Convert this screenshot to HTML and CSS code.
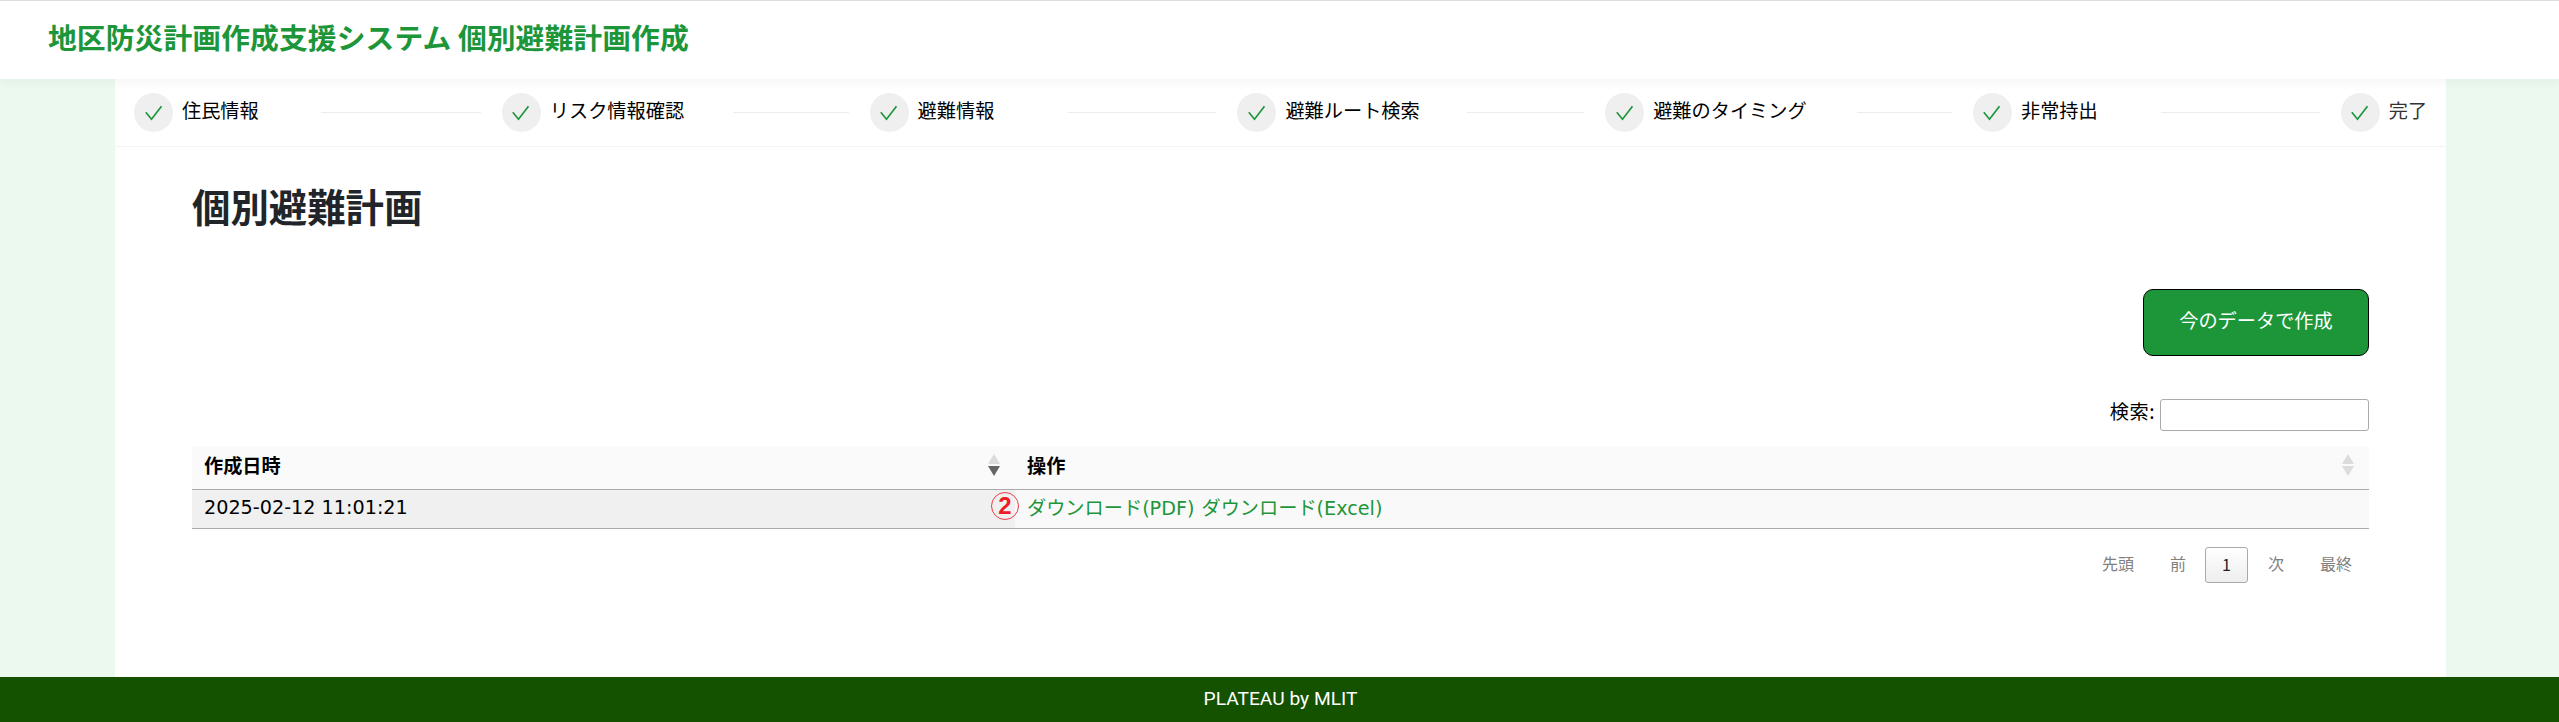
FILE: index.html
```html
<!DOCTYPE html>
<html lang="ja">
<head>
<meta charset="utf-8">
<title>個別避難計画作成</title>
<link rel="stylesheet" href="styles.css">
</head>
<body>
<svg class="defs" width="0" height="0"><symbol id="check" viewBox="0 0 18 20"><path d="M.8 9.3 6.5 16.2 16.5 3.2" fill="none" stroke="currentColor" stroke-width="1.7"/></symbol></svg>
<header class="header"><h1 class="header-title">地区防災計画作成支援システム 個別避難計画作成</h1></header>
<main class="container">
  <ol class="steps">
    <li class="step"><span class="mark"><svg><use href="#check"/></svg></span><span class="label">住民情報</span><span class="line" style="width:160px"></span></li>
    <li class="step"><span class="mark"><svg><use href="#check"/></svg></span><span class="label">リスク情報確認</span><span class="line" style="width:116px"></span></li>
    <li class="step"><span class="mark"><svg><use href="#check"/></svg></span><span class="label">避難情報</span><span class="line" style="width:148px"></span></li>
    <li class="step"><span class="mark"><svg><use href="#check"/></svg></span><span class="label">避難ルート検索</span><span class="line" style="width:117px"></span></li>
    <li class="step"><span class="mark"><svg><use href="#check"/></svg></span><span class="label">避難のタイミング</span><span class="line" style="width:95px"></span></li>
    <li class="step"><span class="mark"><svg><use href="#check"/></svg></span><span class="label">非常持出</span><span class="line" style="width:159px"></span></li>
    <li class="step step-last"><span class="mark"><svg><use href="#check"/></svg></span><span class="label">完了</span></li>
  </ol>
  <section class="content">
    <h2 class="title">個別避難計画</h2>
    <div class="actions"><button class="create" type="button">今のデータで作成</button></div>
    <label class="search"><span class="search-label">検索:</span><input class="search-input" type="text"></label>
    <div class="table">
      <div class="row head">
        <div class="cell date">作成日時<svg class="sort" viewBox="0 0 12 22"><path d="M0 10 6 0l6 10z" fill="#dcdcdc"/><path d="M0 12h12L6 22z" fill="#666"/></svg></div>
        <div class="cell ops">操作<svg class="sort" viewBox="0 0 12 22"><path d="M0 10 6 0l6 10zM0 12h12L6 22z" fill="#dcdcdc"/></svg></div>
      </div>
      <div class="row body">
        <div class="cell date"><span class="latin stamp">2025-02-12 11:01:21</span></div>
        <div class="cell ops"><span class="badge">2</span><a class="link">ダウンロード<span class="latin">(PDF)</span></a><a class="link">ダウンロード<span class="latin">(Excel)</span></a></div>
      </div>
    </div>
    <nav class="pager"><span class="page first">先頭</span><span class="page prev">前</span><span class="page current">1</span><span class="page next">次</span><span class="page last">最終</span></nav>
  </section>
</main>
<footer class="footer">PLATEAU by MLIT</footer>
</body>
</html>
```
FILE: styles.css
```css
* { box-sizing: border-box; }
body {
  margin: 0;
  height: 722px;
  display: flex;
  flex-direction: column;
  background: #ebf9ee;
  color: #000;
  font-family: "Noto Sans CJK JP", sans-serif;
  font-size: 19.2px;
  line-height: 28px;
  overflow: hidden;
}
.defs { position: absolute; }
.header {
  position: relative;
  flex: none;
  height: 79px;
  padding: 15px 48px 0;
  border-top: 1px solid #ddd;
  background: #fff;
  box-shadow: 0 4px 10px rgba(0, 0, 0, .04);
}
.header-title {
  margin: 0;
  font: 700 28.8px/42px "Noto Sans CJK JP", sans-serif;
  letter-spacing: .07px;
  color: #1d963a;
  white-space: nowrap;
}
.container { flex: 1; margin: 0 113px 0 115px; background: #fff; }
.steps {
  display: flex;
  height: 68px;
  margin: 0;
  padding: 0 0 0 19px;
  list-style: none;
  border-bottom: 1px solid #f3f3f3;
}
.step { display: flex; align-items: center; flex: none; width: 367.8px; padding-right: 21px; }
.step-last { width: auto; padding: 0; color: #333; }
.mark {
  display: flex;
  align-items: center;
  justify-content: center;
  width: 39px;
  height: 39px;
  margin-right: 9px;
  border-radius: 50%;
  background: #efefef;
  color: #1d963a;
}
.mark svg { width: 18px; height: 20px; }
.label { padding-bottom: 6px; white-space: nowrap; }
.line { height: 1px; margin-left: auto; background: #ececec; }
.content { padding: 28px 77px 0; }
.title { margin: 0; font: 700 38.4px/60px "Noto Sans CJK JP", sans-serif; color: #212529; }
.actions { display: flex; justify-content: flex-end; margin-top: 54px; }
.create {
  width: 226px;
  height: 67px;
  padding: 0 0 6px;
  border: 1px solid #000;
  border-radius: 10px;
  background: #1d963a;
  color: #fff;
  font: 400 19.2px "Noto Sans CJK JP", sans-serif;
}
.search { display: flex; justify-content: flex-end; gap: 5px; margin-top: 43px; height: 32px; }
.search-label { line-height: 25px; letter-spacing: .5px; }
.search-input { width: 209px; height: 32px; border: 1px solid #aaa; border-radius: 3px; background: #fff; }
.table { margin-top: 15px; }
.row { display: flex; border-bottom: 1px solid #aaa; }
.head { height: 44px; background: #fafafa; font: 700 19.2px/39px "Noto Sans CJK JP", sans-serif; }
.body { height: 39px; line-height: 34px; }
.cell { position: relative; display: flex; padding: 0 13px 0 12px; }
.date { width: 823px; }
.ops { flex: 1; gap: 7px; }
.body .date { background: #f0f0f0; }
.body .ops { background: #f9f9f9; }
.sort { width: 12px; height: 22px; margin: 8px 2px 0 auto; }
.link { color: #1d963a; white-space: nowrap; }
.latin { font-family: "DejaVu Sans", sans-serif; }
.stamp { padding-top: 1px; }
.badge {
  position: absolute;
  left: -24px;
  top: 2px;
  width: 28px;
  height: 28px;
  border: 1px solid #ee3a43;
  border-radius: 50%;
  color: #ee1c25;
  font: 700 24px/26px "Liberation Sans", sans-serif;
  text-align: center;
}
.pager {
  display: flex;
  justify-content: flex-end;
  margin-top: 18px;
  padding-right: 17px;
  font-size: 16px;
  line-height: 33px;
  color: #808080;
}
.first { margin-right: 36px; }
.prev { margin-right: 19px; }
.current {
  width: 43px;
  height: 36px;
  border: 1px solid #aaa;
  border-radius: 3px;
  background: linear-gradient(#fff, #eee);
  color: #222;
  text-align: center;
}
.next { margin: 0 36px 0 20px; }
.footer {
  flex: none;
  height: 45px;
  padding-left: 2px;
  background: #145200;
  color: #fff;
  font: 19.2px/43px Roboto, sans-serif;
  text-align: center;
}
```
